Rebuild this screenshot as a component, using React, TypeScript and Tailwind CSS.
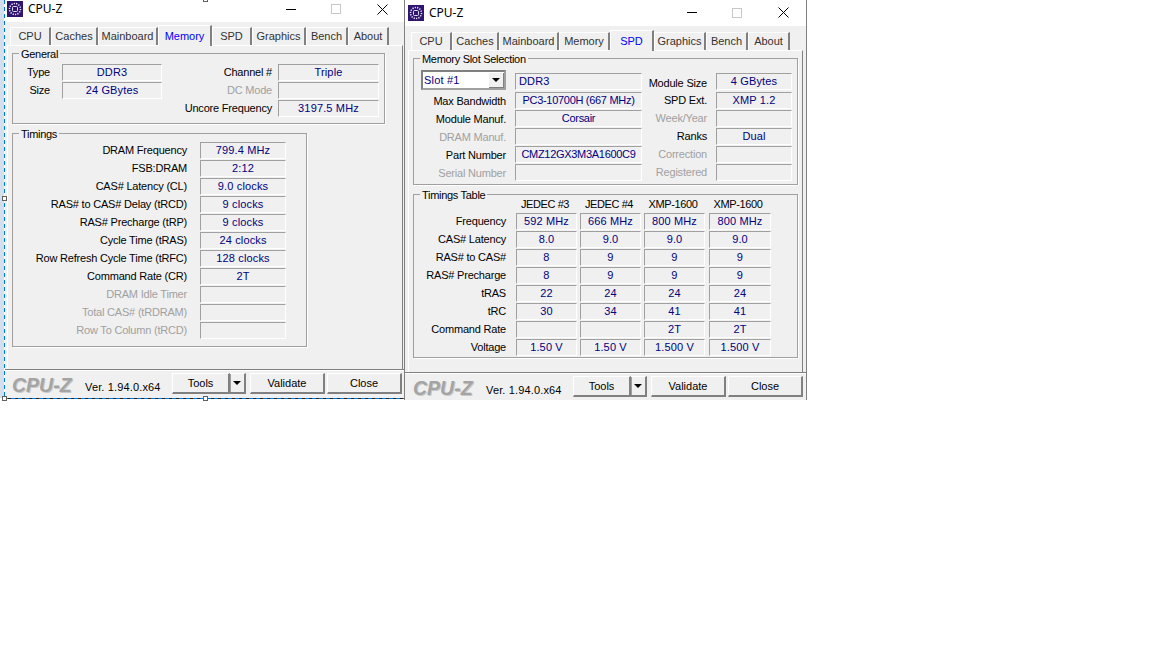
import React from "react";

const FONT = { fontFamily: '"Liberation Sans", sans-serif' };

const CpuzIcon = () => (
  <svg width="16" height="16" viewBox="0 0 16 16" className="shrink-0">
    <rect width="16" height="16" fill="#2f1470" />
    <circle cx="8" cy="8" r="5.5" fill="none" stroke="#f0ecfa" strokeWidth="1.5" strokeDasharray="1.2 1.2" />
    <rect x="5.5" y="5.5" width="5" height="5" rx="1" fill="none" stroke="#e4def4" strokeWidth="1" />
  </svg>
);

const Field = ({ value, className }: { value?: string; className: string }) => (
  <div
    className={`h-[17px] shrink-0 border border-t-[#a0a0a0] border-l-[#a0a0a0] border-b-white border-r-white text-center text-[11px] leading-[15px] tracking-[0.15px] text-[#000080] ${className}`}
  >
    {value}
  </div>
);

const Group = ({ title, className, children }: { title: string; className: string; children: React.ReactNode }) => (
  <div className={`relative border border-[#a0a0a0] shadow-[1px_1px_0_#fff] ${className}`}>
    <span className="absolute -top-[7px] left-[6px] bg-[#f0f0f0] px-[2px] text-[11px] leading-[14px] tracking-[-0.3px] text-black">{title}</span>
    {children}
  </div>
);

const Tabs = ({ active, tabs }: { active: string; tabs: [string, number][] }) => (
  <div className="flex h-[20px] items-end pl-[3px]">
    {tabs.map(([name, w]) =>
      name === active ? (
        <div
          key={name}
          style={{ width: w }}
          className="relative z-10 -mb-px h-[21px] border-t border-l border-r-2 border-t-white border-l-white border-r-[#808080] bg-[#f0f0f0] text-center text-[11px] leading-[20px] text-[#0000ff]"
        >
          {name}
        </div>
      ) : (
        <div
          key={name}
          style={{ width: w }}
          className="h-[18px] border-t border-l border-r-2 border-t-white border-l-white border-r-[#808080] bg-[#f0f0f0] text-center text-[11px] leading-[17px] text-[#333]"
        >
          {name}
        </div>
      )
    )}
  </div>
);

const Button = ({ label, className }: { label: string; className: string }) => (
  <div
    className={`h-[21px] border-t border-l border-r-2 border-b-2 border-t-white border-l-white border-r-[#808080] border-b-[#808080] bg-[#f0f0f0] text-center text-[11px] leading-[19px] text-black ${className}`}
  >
    {label}
  </div>
);

const Footer = ({ className }: { className: string }) => (
  <div className={`flex flex-1 items-start border-t border-[#808080] pt-[3px] shadow-[inset_0_1px_0_#fff] ${className}`}>
    <span className="w-[73px] text-[19.5px] font-bold italic leading-[24px] text-[#a4a4a4] [text-shadow:1px_1px_0_#c8c8c8]">CPU-Z</span>
    <span className="w-[87px] pt-[7px] text-[11px] leading-[14px] tracking-[0.15px] text-black">Ver. 1.94.0.x64</span>
    <div className="flex">
      <Button label="Tools" className="w-[58px]" />
      <div className="flex h-[21px] w-[16px] items-center justify-center border-t border-r-2 border-b-2 border-t-white border-r-[#808080] border-b-[#808080] bg-[#f0f0f0] shadow-[inset_1px_0_0_#a0a0a0]">
        <div className="h-0 w-0 border-x-[4px] border-t-[4px] border-x-transparent border-t-black" />
      </div>
    </div>
    <Button label="Validate" className="ml-[4px] w-[75px]" />
    <Button label="Close" className="ml-[2px] w-[75px]" />
  </div>
);

const Label = ({ text, dim, className }: { text: string; dim?: boolean; className: string }) => (
  <span className={`shrink-0 whitespace-nowrap text-right text-[11px] leading-[14px] tracking-[-0.2px] ${dim ? "text-[#a0a0a0]" : "text-black"} ${className}`}>{text}</span>
);

const TitleBar = ({ className }: { className: string }) => (
  <div className={`flex items-center bg-white ${className}`}>
    <CpuzIcon />
    <span className="ml-[5px] flex-1 text-[12px] leading-[16px] text-black" style={{ fontFamily: '"Noto Sans", sans-serif' }}>
      CPU-Z
    </span>
    <div className="mr-[35px] h-px w-[10px] bg-black" />
    <div className="mr-[36px] h-[10px] w-[10px] border border-[#c8c8c8]" />
    <svg width="11" height="11" viewBox="0 0 11 11">
      <path d="M0.5 0.5L10.5 10.5M10.5 0.5L0.5 10.5" stroke="#000" strokeWidth="1" />
    </svg>
  </div>
);

const timings: [string, string, boolean?][] = [
  ["DRAM Frequency", "799.4 MHz"],
  ["FSB:DRAM", "2:12"],
  ["CAS# Latency (CL)", "9.0 clocks"],
  ["RAS# to CAS# Delay (tRCD)", "9 clocks"],
  ["RAS# Precharge (tRP)", "9 clocks"],
  ["Cycle Time (tRAS)", "24 clocks"],
  ["Row Refresh Cycle Time (tRFC)", "128 clocks"],
  ["Command Rate (CR)", "2T"],
  ["DRAM Idle Timer", "", true],
  ["Total CAS# (tRDRAM)", "", true],
  ["Row To Column (tRCD)", "", true],
];

const slotRows: [string, string, boolean, string, string, boolean][] = [
  ["Max Bandwidth", "PC3-10700H (667 MHz)", false, "SPD Ext.", "XMP 1.2", false],
  ["Module Manuf.", "Corsair", false, "Week/Year", "", true],
  ["DRAM Manuf.", "", true, "Ranks", "Dual", false],
  ["Part Number", "CMZ12GX3M3A1600C9", false, "Correction", "", true],
  ["Serial Number", "", true, "Registered", "", true],
];

const tableRows: [string, string[]][] = [
  ["Frequency", ["592 MHz", "666 MHz", "800 MHz", "800 MHz"]],
  ["CAS# Latency", ["8.0", "9.0", "9.0", "9.0"]],
  ["RAS# to CAS#", ["8", "9", "9", "9"]],
  ["RAS# Precharge", ["8", "9", "9", "9"]],
  ["tRAS", ["22", "24", "24", "24"]],
  ["tRC", ["30", "34", "41", "41"]],
  ["Command Rate", ["", "", "2T", "2T"]],
  ["Voltage", ["1.50 V", "1.50 V", "1.500 V", "1.500 V"]],
];

const memoryTabs: [string, number][] = [
  ["CPU", 41], ["Caches", 47], ["Mainboard", 60], ["Memory", 54], ["SPD", 40], ["Graphics", 54], ["Bench", 42], ["About", 41],
];
const spdTabs: [string, number][] = [
  ["CPU", 41], ["Caches", 47], ["Mainboard", 60], ["Memory", 51], ["SPD", 44], ["Graphics", 52], ["Bench", 42], ["About", 42],
];

const MemoryWindow = () => (
  <div className="absolute left-[5px] top-0 flex h-[398px] w-[399px] flex-col bg-[#f0f0f0]" style={FONT}>
    <TitleBar className="h-[22px] pb-[4px] pl-[2px] pr-[16px]" />
    <div className="px-[2px] pt-[3px]">
      <Tabs active="Memory" tabs={memoryTabs} />
    </div>
    <div className="ml-[2px] mr-px h-[324px] border-t border-l border-r border-t-white border-l-white border-r-[#808080] px-[4px] pt-[7px]">
      <Group title="General" className="h-[71px] w-[373px] pt-[10px]">
        <div className="flex flex-col gap-px pl-[6px]">
          <div className="flex items-center">
            <Label text="Type" className="mb-[2px] w-[31px]" />
            <Field value="DDR3" className="ml-[12px] w-[100px]" />
            <Label text="Channel #" className="mb-[2px] ml-[49px] w-[61px]" />
            <Field value="Triple" className="ml-[6px] w-[101px]" />
          </div>
          <div className="flex items-center">
            <Label text="Size" className="mb-[2px] w-[31px]" />
            <Field value="24 GBytes" className="ml-[12px] w-[100px]" />
            <Label text="DC Mode" dim className="mb-[2px] ml-[49px] w-[61px]" />
            <Field className="ml-[6px] w-[101px]" />
          </div>
          <div className="flex items-center justify-end pr-[5px]">
            <Label text="Uncore Frequency" className="mb-[2px] w-[100px]" />
            <Field value="3197.5 MHz" className="ml-[6px] w-[101px]" />
          </div>
        </div>
      </Group>
      <Group title="Timings" className="mt-[9px] h-[214px] w-[295px] pt-[8px]">
        <div className="flex flex-col gap-px">
          {timings.map(([label, value, dim]) => (
            <div key={label} className="flex items-center">
              <Label text={label} dim={dim} className="mb-[2px] w-[174px]" />
              <Field value={value} className="ml-[13px] w-[86px]" />
            </div>
          ))}
        </div>
      </Group>
    </div>
    <Footer className="pl-[7px]" />
  </div>
);

const SpdWindow = () => (
  <div className="absolute left-[404px] top-0 flex h-[400px] w-[403px] flex-col border-l border-r border-[#808080] bg-[#f0f0f0]" style={FONT}>
    <TitleBar className="h-[26px] pl-[3px] pr-[17px]" />
    <div className="px-[3px] pt-[4px]">
      <Tabs active="SPD" tabs={spdTabs} />
    </div>
    <div className="ml-[3px] mr-[3px] h-[323px] border-t border-l border-r border-t-white border-l-white border-r-[#808080] px-[4px] pt-[7px]">
      <Group title="Memory Slot Selection" className="h-[127px] w-[385px]">
        <div className="flex pl-[7px] pt-[11px]">
          <div className="flex h-[20px] w-[85px] items-center border-2 border-t-[#808080] border-l-[#808080] border-r-[#a0a0a0] border-b-[#a0a0a0] bg-white text-[11px] text-[#000080]">
            <span className="flex-1 pl-px tracking-[0.2px]">Slot #1</span>
            <div className="flex h-full w-[16px] items-center justify-center bg-[#f0f0f0] shadow-[inset_1px_1px_0_#fff,inset_-1px_-1px_0_#808080]">
              <div className="h-0 w-0 border-x-[4px] border-t-[4px] border-x-transparent border-t-black" />
            </div>
          </div>
          <Field value="DDR3" className="ml-[9px] mt-[3px] w-[127px] pl-[3px] !text-left" />
          <Label text="Module Size" className="mt-[6px] w-[65px]" />
          <Field value="4 GBytes" className="ml-[9px] mt-[3px] w-[76px]" />
        </div>
        <div className="mt-[2px] flex flex-col gap-px">
          {slotRows.map(([a, b, dimA, c, d, dimC]) => (
            <div key={a} className="flex items-center">
              <Label text={a} dim={dimA} className="mt-[2px] w-[92px]" />
              <Field value={b} className="ml-[9px] w-[127px] !tracking-[-0.3px]" />
              <Label text={c} dim={dimC} className="w-[65px]" />
              <Field value={d} className="ml-[9px] w-[76px]" />
            </div>
          ))}
        </div>
      </Group>
      <Group title="Timings Table" className="mt-[9px] h-[164px] w-[385px]">
        <div className="flex pl-[99px] pt-[2px] text-[11px] leading-[14px] tracking-[-0.4px] text-black">
          {["JEDEC #3", "JEDEC #4", "XMP-1600", "XMP-1600"].map((h, i) => (
            <span key={i} className={i === 3 ? "ml-px w-[64px] text-center" : "w-[64px] text-center"}>{h}</span>
          ))}
        </div>
        <div className="mt-[2px] flex flex-col gap-px">
          {tableRows.map(([label, values]) => (
            <div key={label} className="flex items-center">
              <Label text={label} className="w-[92px]" />
              <div className="ml-[10px] flex gap-[3px]">
                {values.map((v, i) => (
                  <Field key={i} value={v} className={i === 3 ? "ml-px w-[62px]" : "w-[61px]"} />
                ))}
              </div>
            </div>
          ))}
        </div>
      </Group>
    </div>
    <Footer className="pl-[8px]" />
  </div>
);

const Handle = ({ className }: { className: string }) => (
  <div className={`absolute h-[5px] w-[5px] border border-[#606060] bg-white ${className}`} />
);

export default function App() {
  return (
    <div className="relative h-[648px] w-[1152px] overflow-hidden bg-white">
      <div className="absolute left-0 top-0 h-[398px] w-[4px] bg-[#d4deec]" />
      <MemoryWindow />
      {/* selection frame round the left window */}
      <div className="absolute left-[4px] top-0 h-[399px] w-px bg-[repeating-linear-gradient(180deg,#0078d7_0_4px,#ffffff_4px_7px)]" />
      <div className="absolute left-[4px] top-[398px] h-px w-[401px] bg-[repeating-linear-gradient(90deg,#0078d7_0_4px,#202020_4px_7px)]" />
      <Handle className="left-[2px] top-[196px]" />
      <Handle className="left-[2px] top-[396px]" />
      <Handle className="left-[203px] top-[396px]" />
      <Handle className="left-[203px] -top-[3px]" />
      <SpdWindow />
    </div>
  );
}
